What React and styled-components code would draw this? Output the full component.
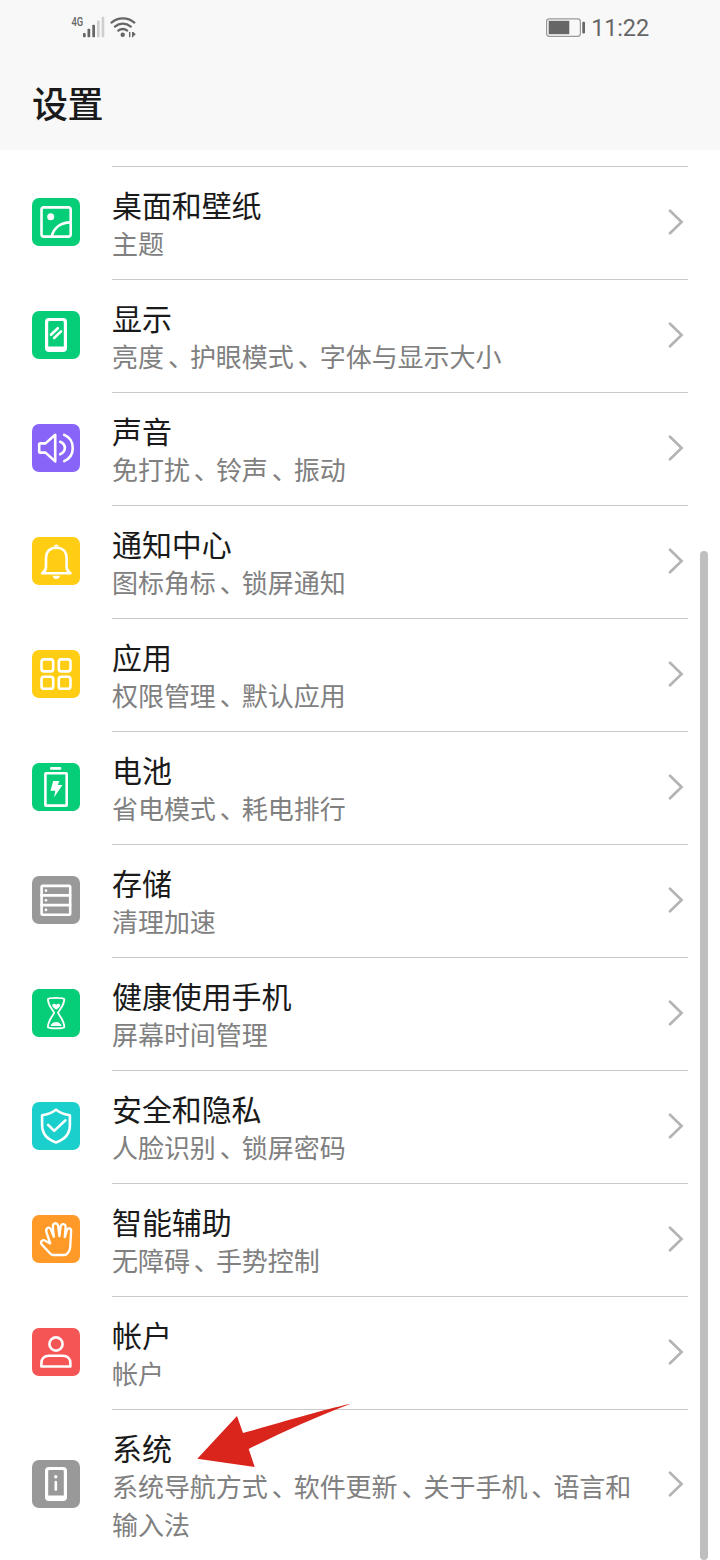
import React from 'react';
import styled, { createGlobalStyle } from 'styled-components';

const rows = [
  { icon: 'wallpaper', color: '#05cd78', title: '桌面和壁纸', sub: '主题' },
  { icon: 'display', color: '#05cd78', title: '显示', sub: '亮度、护眼模式、字体与显示大小' },
  { icon: 'sound', color: '#8865f8', title: '声音', sub: '免打扰、铃声、振动' },
  { icon: 'bell', color: '#ffce14', title: '通知中心', sub: '图标角标、锁屏通知' },
  { icon: 'apps', color: '#ffce14', title: '应用', sub: '权限管理、默认应用' },
  { icon: 'battery', color: '#05cd78', title: '电池', sub: '省电模式、耗电排行' },
  { icon: 'storage', color: '#999999', title: '存储', sub: '清理加速' },
  { icon: 'health', color: '#05cd78', title: '健康使用手机', sub: '屏幕时间管理' },
  { icon: 'shield', color: '#1bcfcd', title: '安全和隐私', sub: '人脸识别、锁屏密码' },
  { icon: 'hand', color: '#ff9a28', title: '智能辅助', sub: '无障碍、手势控制' },
  { icon: 'account', color: '#f55555', title: '帐户', sub: '帐户' },
  { icon: 'system', color: '#999999', title: '系统', sub: '系统导航方式、软件更新、关于手机、语言和输入法' }
];

const phoneShape = 'M17 7H31A4 4 0 0 1 35 11V37A4 4 0 0 1 31 41H17A4 4 0 0 1 13 37V11A4 4 0 0 1 17 7ZM17.6 10A1.4 1.4 0 0 0 16.2 11.4V35.4H31.8V11.4A1.4 1.4 0 0 0 30.4 10Z';

const glyphs = {
  wallpaper: (
    <>
      <rect x="9.5" y="9.4" width="29.2" height="29.2" rx="2.4" />
      <circle cx="18.7" cy="18.8" r="3.5" fill="#fff" stroke="none" />
      <path d="M19.8 38.2C22 29.5 29 24.6 38.4 24.4" />
    </>
  ),
  display: (
    <>
      <path d={phoneShape} fill="#fff" fillRule="evenodd" stroke="none" />
      <path d="M19 23.8L25.8 17.2M22.2 27L29 20.4" />
    </>
  ),
  sound: (
    <>
      <path d="M7.2 20.6Q7.2 19.4 8.4 19.4H13.5L23.2 10.8V37.4L13.5 28.6H8.4Q7.2 28.6 7.2 27.4Z" />
      <path d="M28.2 17.8C34.4 20.4 34.4 27.6 28.2 30.2M32.2 10.9C43.6 15.6 43.6 32.4 32.2 37.1" />
    </>
  ),
  bell: (
    <>
      <path d="M10.2 36.2H38.4" />
      <path d="M10.8 35.8Q14 33.4 14 29.8V21C14 14.4 18.2 10.7 24.3 10.7S34.6 14.4 34.6 21V29.8Q34.6 33.4 37.8 35.8" />
      <path d="M21.7 9.4A2.7 2.7 0 0 1 26.9 9.4ZM20.7 38.8H28Q27.2 42 24.3 42T20.7 38.8Z" fill="#fff" stroke="none" />
    </>
  ),
  apps: (
    <>
      <rect x="9.5" y="9.4" width="11.7" height="12" rx="2.6" />
      <rect x="26.8" y="9.4" width="11.7" height="12" rx="2.6" />
      <rect x="9.5" y="26.8" width="11.7" height="12" rx="2.6" />
      <rect x="26.8" y="26.8" width="11.7" height="12" rx="2.6" />
    </>
  ),
  battery: (
    <>
      <rect x="18" y="4" width="11.3" height="2.8" rx="1.2" fill="#fff" stroke="none" />
      <rect x="13.4" y="10.2" width="21.3" height="32.4" rx="0.6" />
      <path d="M21.2 18H27.5L25.7 22H30.4L22.2 34.2L23.3 27.7H18.5Z" fill="#fff" stroke="none" />
    </>
  ),
  storage: (
    <>
      <rect x="9.6" y="9.9" width="28.6" height="28.8" rx="1.2" />
      <path d="M9.6 19.4H38.2M9.6 29.1H38.2" />
      <g fill="#fff" stroke="none">
        <circle cx="14" cy="14.6" r="1.3" />
        <circle cx="14" cy="24.3" r="1.3" />
        <circle cx="14" cy="33.9" r="1.3" />
      </g>
    </>
  ),
  health: (
    <g strokeWidth="1.8">
      <path d="M15.9 10.1Q16.3 8.9 24.1 8.9T32.3 10.1C32.1 16.6 27.8 20.3 26 23.8C27.8 27.4 32.1 31.2 32.3 38.1Q31.9 39.3 24.1 39.3T15.9 38.1C16.1 31.2 20.4 27.4 22.2 23.8C20.4 20.3 16.1 16.6 15.9 10.1Z" />
      <path d="M24.2 20.6C21.6 18.8 20.2 17.5 20.2 16.2C20.2 14.6 22.8 14 24.2 15.8C25.6 14 28.2 14.6 28.2 16.2C28.2 17.5 26.8 18.8 24.2 20.6ZM18.4 36.9Q20.2 33 24.1 33T29.8 36.9Z" fill="#fff" stroke="none" />
    </g>
  ),
  shield: (
    <>
      <path d="M24 7.7Q30 12.1 37.9 13.3V23C37.9 31.8 33 37.4 24 40.4C15 37.4 10.1 31.8 10.1 23V13.3Q18 12.1 24 7.7Z" />
      <path d="M16.1 22.9L22.2 28.9L33.3 18.4" />
    </>
  ),
  hand: (
    <path
      d="M21.2 40Q19.6 40 18.2 38.5L9.8 29.6C7.8 27.3 10 24.2 12.8 25.5L18.2 28.4L14.6 17.6C13 13.2 17.2 10.6 19 14.6L21.8 21.8L20.9 12C20.4 7.6 25.6 6.8 26.2 11.2L27.4 21.2L28.6 11.6C29.2 7.8 34 8.6 33.6 12.4L32.8 22.2L34.8 15.4C36 12 39.5 13.2 39.1 16.6L38.2 32.4Q38 35.8 35.6 38.2Q34.2 40 32.2 40Z"
      strokeWidth="2.3"
    />
  ),
  account: (
    <>
      <circle cx="24" cy="16" r="6.6" />
      <path d="M9.4 38.5V35.2C9.4 30.4 12.6 27.8 17 27.8H30.8C35.2 27.8 38.4 30.4 38.4 35.2V38.5Z" />
    </>
  ),
  system: (
    <>
      <path d={phoneShape} fill="#fff" fillRule="evenodd" stroke="none" />
      <circle cx="23.8" cy="16.8" r="1.7" fill="#fff" stroke="none" />
      <path d="M23.8 22V29.6" />
    </>
  )
};

const StatusBar = () => (
  <Status>
    <svg width="66" height="24" viewBox="71 15 66 24">
      <text x="71.4" y="26" fontFamily="Roboto, sans-serif" fontSize="12.5" fontWeight="500" fill="#666" textLength="11.8" lengthAdjust="spacingAndGlyphs">4G</text>
      <g fill="#666">
        <rect x="83" y="33" width="2.7" height="4.3" rx="0.8" />
        <rect x="87.5" y="28.8" width="2.7" height="8.5" rx="0.8" />
        <rect x="92.3" y="24.8" width="2.7" height="12.5" rx="0.8" />
        <rect x="97" y="20.6" width="2.7" height="16.7" rx="0.8" fill="#cfcfcf" />
        <rect x="101.6" y="16.8" width="2.7" height="20.5" rx="0.8" fill="#cfcfcf" />
        <circle cx="122.7" cy="34.7" r="2.2" />
        <path d="M126.4 34.9L129 32V37.2H130.4V32H129ZM135.8 34.2L133.4 32H132V37.2H133.4V36.2Z" />
      </g>
      <g fill="none" stroke="#666" strokeWidth="2.3" strokeLinecap="round">
        <path d="M111.5 22.6Q116.5 18.4 122.9 18.4T134.3 22.6" />
        <path d="M114.9 26.6Q118.4 23.7 122.8 23.7T130.8 26.6" />
        <path d="M118.3 30.6Q120.3 29 122.8 29T127.2 30.6" />
      </g>
    </svg>
    <Clock>
      <svg width="40" height="20" viewBox="546 18 40 20">
        <rect x="546.6" y="18.8" width="33.8" height="17.6" rx="2.8" fill="none" stroke="#999" strokeWidth="1.2" />
        <rect x="548.7" y="20.8" width="20.6" height="13.4" fill="#666" />
        <rect x="582.3" y="21.8" width="2.7" height="11.6" rx="1" fill="#666" />
      </svg>
      <Time>11:22</Time>
    </Clock>
  </Status>
);

// the enumeration comma sits a little right of its default place
const withCommas = (text) =>
  text.split('、').map((part, index) => (
    <React.Fragment key={index}>
      {index > 0 && <Comma>、</Comma>}
      {part}
    </React.Fragment>
  ));

const App = () => {
  return (
    <>
      <GlobalStyle />
      <Screen>
        <Header>
          <StatusBar />
          <PageTitle>设置</PageTitle>
        </Header>
        <List>
          {rows.map((row) => (
            <Row key={row.icon}>
              <Tile $color={row.color}>
                <svg width="48" height="48" viewBox="0 0 48 48" fill="none" stroke="#fff" strokeWidth="2.6" strokeLinecap="round" strokeLinejoin="round">
                  {glyphs[row.icon]}
                </svg>
              </Tile>
              <Body>
                <Texts>
                  <Title>{row.title}</Title>
                  <Sub>{withCommas(row.sub)}</Sub>
                </Texts>
                <Chevron viewBox="0 0 16 26">
                  <path d="M2 1.7L13.6 13L2 24.3" />
                </Chevron>
              </Body>
            </Row>
          ))}
        </List>
        <Scrollbar />
        <Arrow viewBox="0 0 156 66">
          <path d="M1.3 56.7L41 14L47 31C80 22 125 8 154.8 1.7C120 15 84 31 52.7 47L58.7 65Z" />
        </Arrow>
      </Screen>
    </>
  );
};

export default App;

const GlobalStyle = createGlobalStyle`
  body {
    margin: 0;
    background: #fff;
  }
`;

const Screen = styled.div`
  position: relative;
  width: 720px;
  height: 1560px;
  overflow: hidden;
  background: #fff;
  font-family: 'Noto Sans CJK SC', sans-serif;
`;

const Header = styled.header`
  height: 150px;
  background: #f8f8f8;
`;

const Status = styled.div`
  display: flex;
  justify-content: space-between;
  align-items: center;
  height: 54px;
  padding: 0 71px;
`;

const Clock = styled.div`
  display: flex;
  align-items: center;
  gap: 5px;

  svg {
    margin-top: 2px;
  }
`;

const Time = styled.span`
  font-family: Roboto, sans-serif;
  font-size: 23.5px;
  line-height: 28px;
  letter-spacing: -0.15px;
  margin-top: 1px;
  color: #666;
`;

const PageTitle = styled.h1`
  margin: 22px 0 0 32px;
  font-size: 36px;
  line-height: 52px;
  font-weight: 500;
  letter-spacing: -0.4px;
  color: #1a1a1a;
`;

const List = styled.main`
  padding: 16px 32px 0;
`;

const Row = styled.div`
  display: flex;
  align-items: center;
  gap: 32px;
`;

const Tile = styled.div`
  flex: none;
  width: 48px;
  height: 48px;
  margin-bottom: 1px;
  border-radius: 7px;
  background: ${(props) => props.$color};

  svg {
    display: block;
  }
`;

const Body = styled.div`
  flex: 1;
  display: flex;
  align-items: center;
  justify-content: space-between;
  border-top: 1px solid #c9c9c9;
`;

const Texts = styled.div`
  width: 530px;
  padding: 18px 0 17px;
`;

const Title = styled.div`
  margin-bottom: 1px;
  font-size: 30px;
  line-height: 38px;
  letter-spacing: -0.1px;
  color: #1a1a1a;
`;

const Sub = styled.div`
  font-size: 26px;
  line-height: 38px;
  letter-spacing: -0.05px;
  color: #808080;
`;

const Comma = styled.span`
  padding-left: 4px;
  letter-spacing: -4px;
`;

const Chevron = styled.svg`
  width: 16px;
  height: 26px;
  margin: 0 4px 2px 0;
  fill: none;
  stroke: #b3b3b3;
  stroke-width: 2.6;
  stroke-linecap: round;
`;

const Scrollbar = styled.div`
  position: absolute;
  top: 551px;
  right: 12px;
  bottom: 0;
  width: 8px;
  border-radius: 4px;
  background: #bfbfbf;
`;

/* Pointer drawn over the last row */
const Arrow = styled.svg`
  position: absolute;
  left: 196px;
  top: 1402px;
  width: 156px;
  height: 66px;
  fill: #da251d;
`;
